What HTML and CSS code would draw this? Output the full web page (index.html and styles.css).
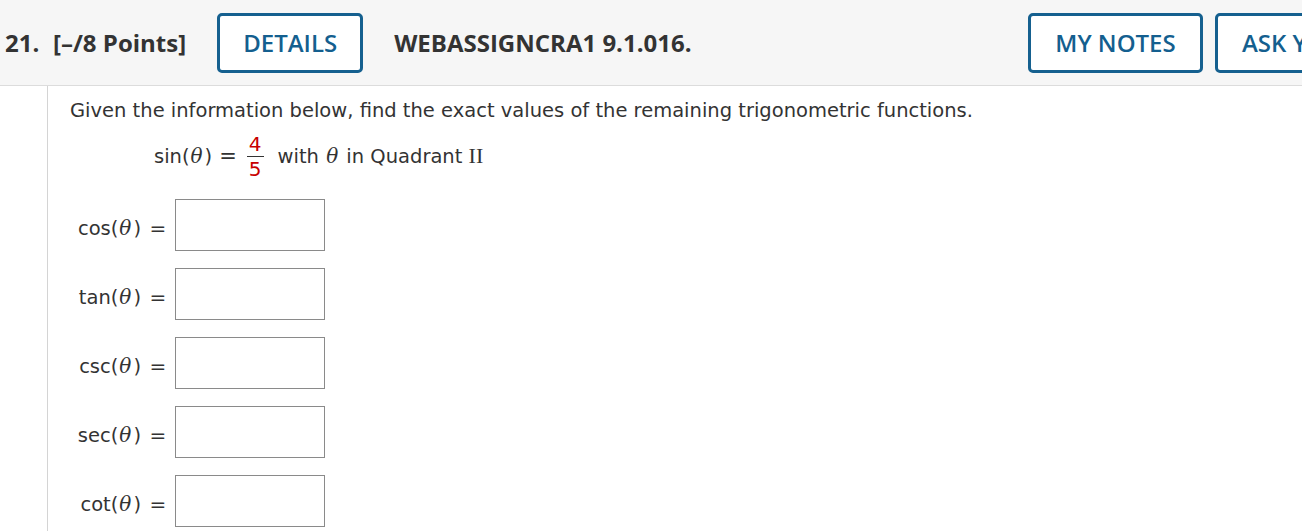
FILE: index.html
```html
<!DOCTYPE html>
<html>
<head>
<meta charset="utf-8">
<link rel="stylesheet" href="styles.css">
</head>
<body>
<div class="header">
  <span class="qnum">21.</span>
  <span class="points">[–/8 Points]</span>
  <button class="btn details">DETAILS</button>
  <span class="code">WEBASSIGNCRA1 9.1.016.</span>
  <div class="spacer"></div>
  <button class="btn notes">MY NOTES</button>
  <button class="btn ask">ASK YOUR TEACHER</button>
</div>
<div class="body">
  <div class="content">
    <p class="prompt">Given the information below, find the exact values of the remaining trigonometric functions.</p>
    <div class="given">
      <span class="fn">sin(<i class="th">θ</i>)</span>
      <span class="eq">=</span>
      <span class="frac"><span class="num">4</span><span class="den">5</span></span>
      <span class="with">with <i class="th">θ</i> in Quadrant <span class="roman">II</span></span>
    </div>
    <div class="rows">
      <div class="row"><span class="lbl">cos(<i class="th">θ</i>)</span><span class="eq2">=</span><input class="ans" type="text"></div>
      <div class="row"><span class="lbl">tan(<i class="th">θ</i>)</span><span class="eq2">=</span><input class="ans" type="text"></div>
      <div class="row"><span class="lbl">csc(<i class="th">θ</i>)</span><span class="eq2">=</span><input class="ans" type="text"></div>
      <div class="row"><span class="lbl">sec(<i class="th">θ</i>)</span><span class="eq2">=</span><input class="ans" type="text"></div>
      <div class="row"><span class="lbl">cot(<i class="th">θ</i>)</span><span class="eq2">=</span><input class="ans" type="text"></div>
    </div>
  </div>
</div>
</body>
</html>
```
FILE: styles.css
```css
html, body {
  margin: 0;
  padding: 0;
  background: #fff;
  overflow: hidden;
}
body {
  width: 1302px;
  height: 531px;
}
.header {
  height: 85px;
  background: #f6f6f6;
  border-bottom: 1px solid #dcdcdc;
  display: flex;
  align-items: center;
  padding-left: 5px;
  white-space: nowrap;
  font-family: "Open Sans", sans-serif;
  color: #333;
  box-sizing: content-box;
}
.qnum {
  font-weight: 700;
  font-size: 24px;
  width: 48px;
}
.points {
  font-weight: 700;
  font-size: 24px;
  margin-right: 31px;
}
.btn {
  font-family: "Open Sans", sans-serif;
  font-weight: 600;
  font-size: 24px;
  color: #145f8f;
  background: #fff;
  border: 3px solid #15608f;
  border-radius: 5px;
  height: 60px;
  padding: 0 20px;
  box-sizing: border-box;
  flex: none;
}
.details {
  width: 146px;
  margin-right: 31px;
}
.code {
  font-weight: 700;
  font-size: 24px;
}
.spacer {
  flex: 1;
}
.notes {
  width: 175px;
  margin-right: 12px;
}
.ask {
  width: 230px;
  margin-right: -143px;
  text-align: left;
  padding-left: 24px;
}
.body {
  margin-left: 47px;
  border-left: 1px solid #d4d4d4;
  height: 445px;
  font-family: "DejaVu Sans", Verdana, sans-serif;
  color: #333;
}
.content {
  padding-left: 22px;
}
.prompt {
  margin: 0;
  padding-top: 13px;
  font-size: 19.5px;
  line-height: 24px;
}
.given {
  display: flex;
  align-items: center;
  margin-left: 84px;
  margin-top: 7px;
  height: 52px;
  font-size: 19.5px;
}
.th {
  font-family: "DejaVu Serif", "Liberation Serif", serif;
  font-style: italic;
  font-size: 20px;
  padding: 0 2px 0 1px;
}
.roman {
  font-family: "Liberation Serif", serif;
  font-size: 22px;
}
.eq {
  margin: 0 9px 0 7px;
  font-size: 21px;
}
.frac {
  display: inline-flex;
  flex-direction: column;
  align-items: center;
  color: #c80000;
  font-size: 20px;
  line-height: 22px;
  padding: 0 1px;
}
.num {
  border-bottom: 1px solid #333;
  padding: 0 2px 1px;
}
.den {
  padding-top: 1px;
}
.with {
  margin-left: 13px;
}
.rows {
  display: flex;
  flex-direction: column;
  gap: 17px;
  margin-top: 17px;
}
.row {
  display: flex;
  align-items: center;
  height: 52px;
  font-size: 19.5px;
}
.lbl {
  width: 71px;
  text-align: right;
  white-space: nowrap;
  padding-top: 5px;
}
.eq2 {
  width: 34px;
  text-align: center;
  font-size: 20px;
  padding-top: 5px;
}
.ans {
  width: 150px;
  height: 52px;
  box-sizing: border-box;
  border: 1px solid #8a8a8a;
  border-radius: 0;
  margin: 0;
  background: #fff;
}
```
